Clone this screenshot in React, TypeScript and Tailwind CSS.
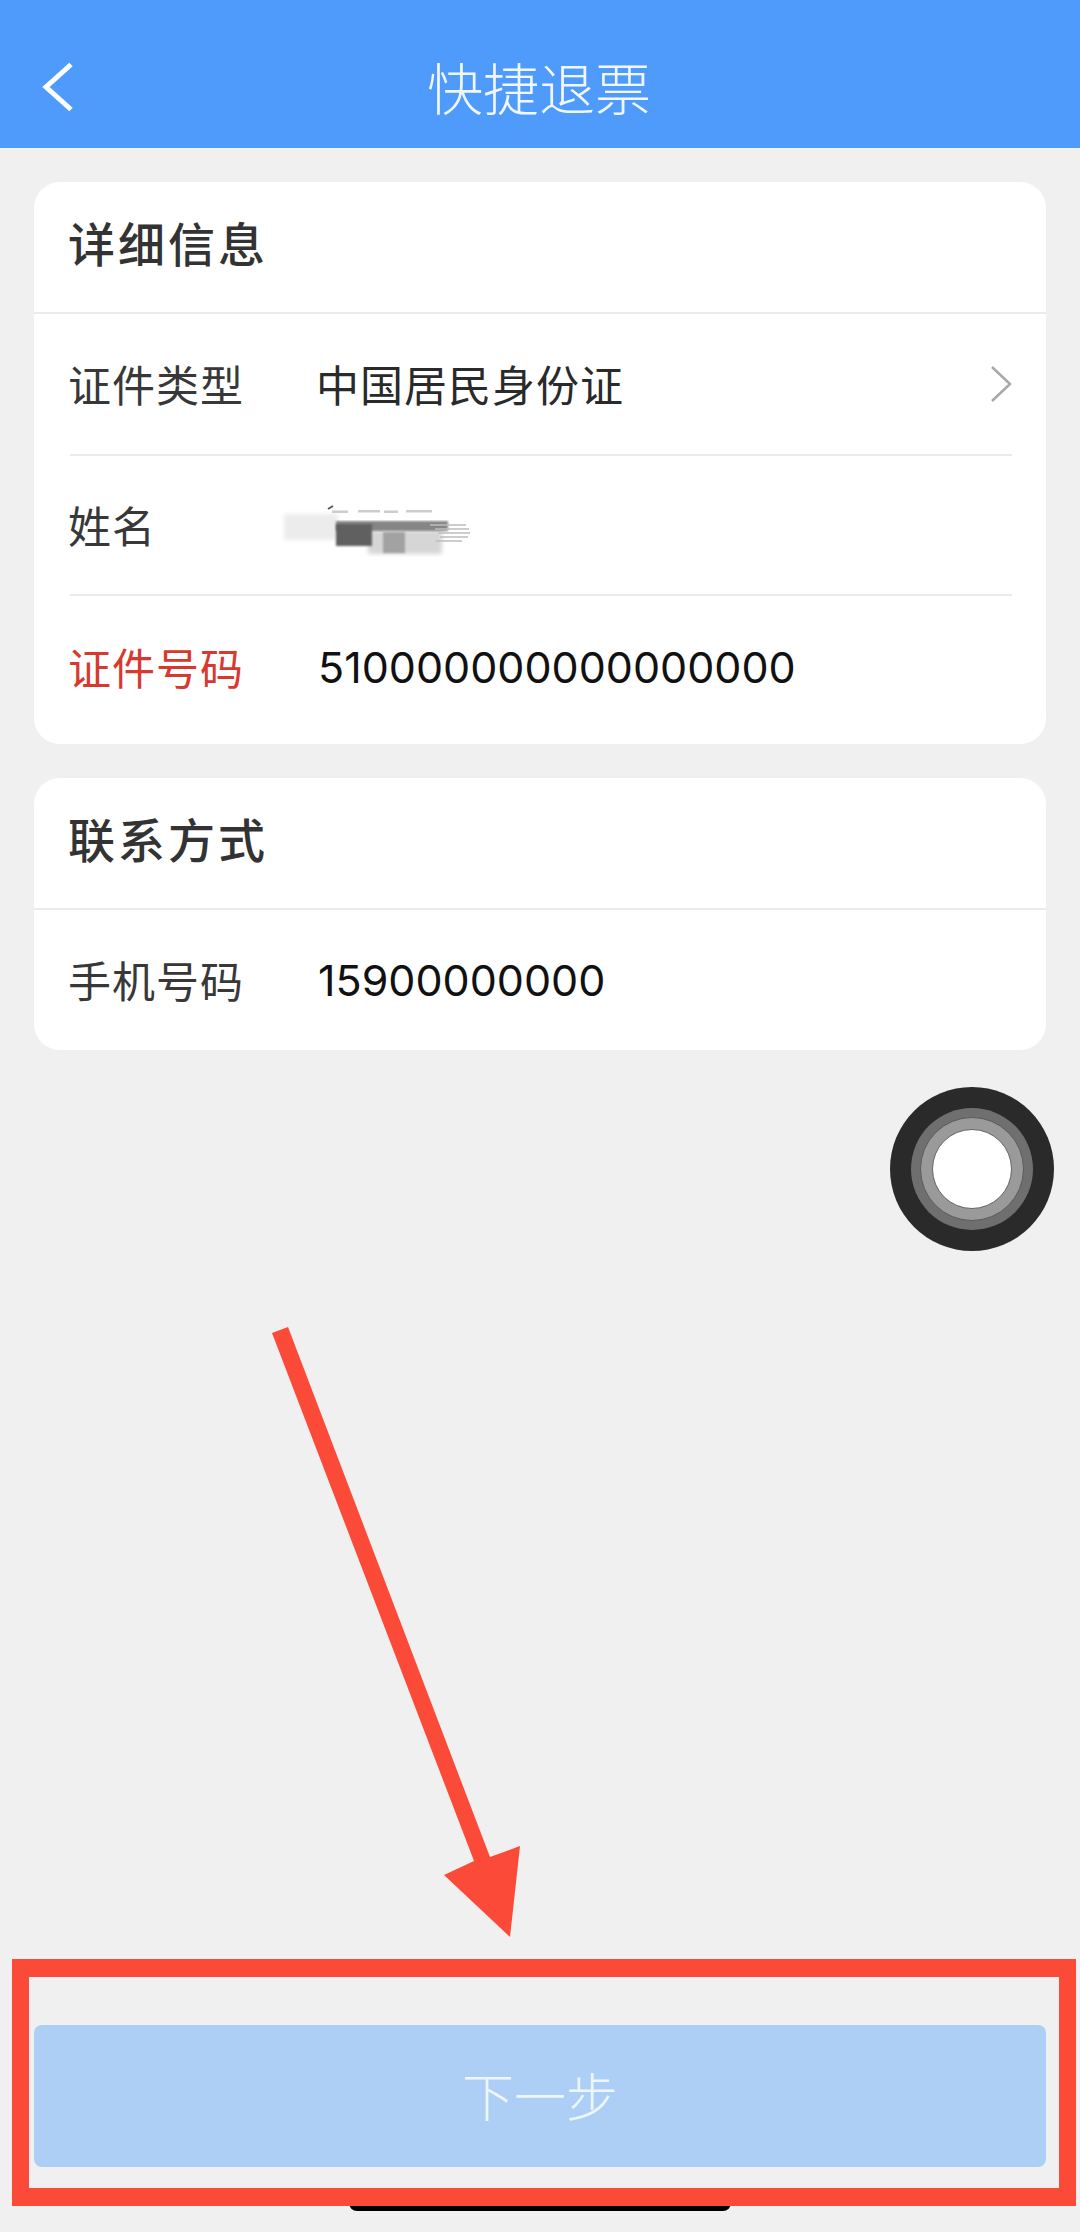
const font = 'font-["Noto_Sans_CJK_SC","Noto_Sans",sans-serif]';

function Row({ label, red, last, height = 'h-[140px]', children }: { label: string; red?: boolean; last?: boolean; height?: string; children?: React.ReactNode }) {
  return (
    <div className={`flex items-center ${height} ml-[36px] mr-[34px] ${last ? '' : 'border-b-2 border-[#ebebeb]'}`}>
      <span className={`-ml-[2px] -mt-[2px] w-[250px] shrink-0 text-[43px] tracking-[1px] ${red ? 'text-[#d8392f]' : 'text-[#383838]'}`}>{label}</span>
      {children}
    </div>
  );
}

function Card({ title, children }: { title: string; children: React.ReactNode }) {
  return (
    <div className="mx-[34px] bg-white rounded-[26px]">
      <div className="h-[132px] px-[34px] pb-[10px] flex items-center border-b-2 border-[#ebebeb]">
        <span className="text-[47px] font-medium tracking-[3px] text-[#333333]">{title}</span>
      </div>
      {children}
    </div>
  );
}

function Scribble() {
  return (
    <svg width="200" height="64" viewBox="0 0 200 64" className="absolute left-[-38px] top-[-25px]">
      <defs>
        <filter id="b1"><feGaussianBlur stdDeviation="2.2" /></filter>
        <filter id="b2"><feGaussianBlur stdDeviation="1" /></filter>
        <filter id="b3"><feGaussianBlur stdDeviation="0.6" /></filter>
      </defs>
      <rect x="4" y="14" width="54" height="26" fill="#ececec" filter="url(#b1)" />
      <path d="M52 12h16M78 11h22M104 12h14M126 11h26" stroke="#cdcdcd" strokeWidth="3" filter="url(#b3)" />
      <path d="M48 9l5-3" stroke="#555555" strokeWidth="2" filter="url(#b3)" />
      <rect x="88" y="30" width="74" height="24" fill="#d6d6d6" filter="url(#b1)" />
      <rect x="56" y="21" width="112" height="10" fill="#858585" filter="url(#b2)" />
      <rect x="56" y="24" width="36" height="22" fill="#606060" filter="url(#b2)" />
      <rect x="103" y="32" width="22" height="21" fill="#a2a2a2" filter="url(#b2)" />
      <path d="M150 25h36M155 29h34M158 33h32M160 37h28M156 41h26" stroke="#bdbdbd" strokeWidth="1.5" filter="url(#b3)" />
    </svg>
  );
}

export default function App() {
  return (
    <div className={`relative w-[1080px] h-[2232px] overflow-hidden bg-[#f0f0f0] flex flex-col ${font}`}>
      <header className="relative h-[148px] shrink-0 bg-[#4f9bfb] flex items-center justify-center pt-[24px]">
        <svg width="34" height="50" viewBox="0 0 34 50" fill="none" className="absolute left-[41px] top-[62px]">
          <path d="M30 2.5 L5 25 L30 47.5" stroke="white" strokeWidth="5" />
        </svg>
        <span className="-ml-[2px] text-[56px] font-light text-[#f2f7fe] leading-none">快捷退票</span>
      </header>

      <div className="mt-[34px] flex flex-col gap-[34px]">
        <Card title="详细信息">
          <Row label="证件类型" height="h-[142px]">
            <span className="-ml-[2px] -mt-[2px] text-[43px] tracking-[1px] text-[#2a2a2a]">中国居民身份证</span>
            <svg width="22" height="38" viewBox="0 0 22 38" fill="none" className="ml-auto">
              <path d="M2 2 L20 19 L2 36" stroke="#a8a8a8" strokeWidth="2.5" />
            </svg>
          </Row>
          <Row label="姓名">
            <span className="relative block h-0 w-0"><Scribble /></span>
          </Row>
          <Row label="证件号码" red last height="h-[148px] pb-[6px]">
            <span className="font-['Inter',sans-serif] text-[43px] text-[#111111]">510000000000000000</span>
          </Row>
        </Card>
        <Card title="联系方式">
          <Row label="手机号码" last>
            <span className="font-['Inter',sans-serif] text-[43px] text-[#111111]">15900000000</span>
          </Row>
        </Card>
      </div>

      <div className="mt-auto mb-[65px] mx-[34px] h-[142px] rounded-[8px] bg-[#aecff5] flex items-center justify-center">
        <span className="-mt-[3px] text-[52px] font-light text-[#edf5fd] leading-none">下一步</span>
      </div>

      {/* assistive touch button */}
      <div className="absolute left-[890px] top-[1087px] w-[164px] h-[164px] rounded-full bg-[#2a2a2a] flex items-center justify-center">
        <div className="w-[122px] h-[122px] rounded-full bg-[#6f6f6f] flex items-center justify-center">
          <div className="w-[104px] h-[104px] rounded-full bg-[#9a9a9a] border border-[#5a5a5a] flex items-center justify-center">
            <div className="w-[80px] h-[80px] rounded-full bg-white border border-[#666666]" />
          </div>
        </div>
      </div>

      {/* home bar, mostly hidden by the annotation frame */}
      <div className="absolute left-[349px] top-[2190px] w-[382px] h-[21px] rounded-b-[8px] bg-black" />

      {/* red annotation: frame and arrow */}
      <div className="absolute left-[12px] top-[1959px] w-[1064px] h-[247px] border-x-[17px] border-y-[18px] border-[#fb4a38]" />
      <svg width="1080" height="2232" viewBox="0 0 1080 2232" className="absolute left-0 top-0 pointer-events-none">
        <path d="M272 1333 L288 1327 L490 1857 L520 1846 L510 1937 L444 1875 L474 1861 Z" fill="#fb4a38" />
      </svg>
    </div>
  );
}
